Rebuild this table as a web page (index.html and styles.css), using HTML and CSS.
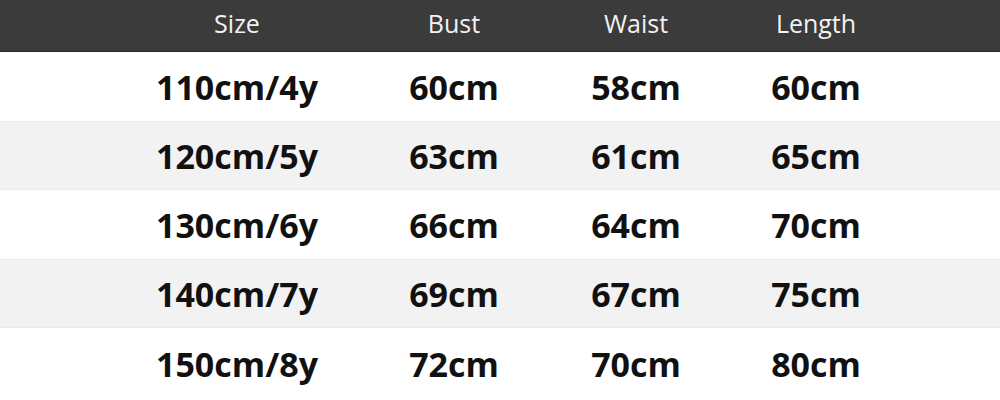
FILE: index.html
```html
<!DOCTYPE html>
<html>
<head>
<meta charset="utf-8">
<link rel="stylesheet" href="styles.css">
</head>
<body>
<div class="chart">
  <div class="row head">
    <div class="cell">Size</div><div class="cell">Bust</div><div class="cell">Waist</div><div class="cell">Length</div>
  </div>
  <div class="row">
    <div class="cell">110cm/4y</div><div class="cell">60cm</div><div class="cell">58cm</div><div class="cell">60cm</div>
  </div>
  <div class="row alt">
    <div class="cell">120cm/5y</div><div class="cell">63cm</div><div class="cell">61cm</div><div class="cell">65cm</div>
  </div>
  <div class="row">
    <div class="cell">130cm/6y</div><div class="cell">66cm</div><div class="cell">64cm</div><div class="cell">70cm</div>
  </div>
  <div class="row alt">
    <div class="cell">140cm/7y</div><div class="cell">69cm</div><div class="cell">67cm</div><div class="cell">75cm</div>
  </div>
  <div class="row last">
    <div class="cell">150cm/8y</div><div class="cell">72cm</div><div class="cell">70cm</div><div class="cell">80cm</div>
  </div>
</div>
</body>
</html>
```
FILE: styles.css
```css
html, body {
  margin: 0;
  padding: 0;
  background: #ffffff;
}
.chart {
  width: 1000px;
  height: 400px;
  display: flex;
  flex-direction: column;
  font-family: "Open Sans", "Noto Sans", sans-serif;
  overflow: hidden;
}
.row {
  display: grid;
  grid-template-columns: 216px 218px 146px 214px;
  padding-left: 129px;
  height: 69px;
  flex: none;
  align-items: center;
  background: #ffffff;
  color: #111111;
  font-weight: 700;
  font-size: 34px;
  box-sizing: border-box;
}
.row.alt {
  background: #f2f2f2;
  border-top: 1px solid #ebebeb;
  border-bottom: 1px solid #ebebeb;
}
.row.last {
  flex: 1;
}
.row.head {
  height: 52px;
  padding-bottom: 5px;
  background: #3b3b3b;
  color: #f2f2f2;
  font-weight: 400;
  font-size: 25px;
  border-bottom: 1px solid #2a2a2a;
}
.cell {
  text-align: center;
  white-space: nowrap;
}
```
